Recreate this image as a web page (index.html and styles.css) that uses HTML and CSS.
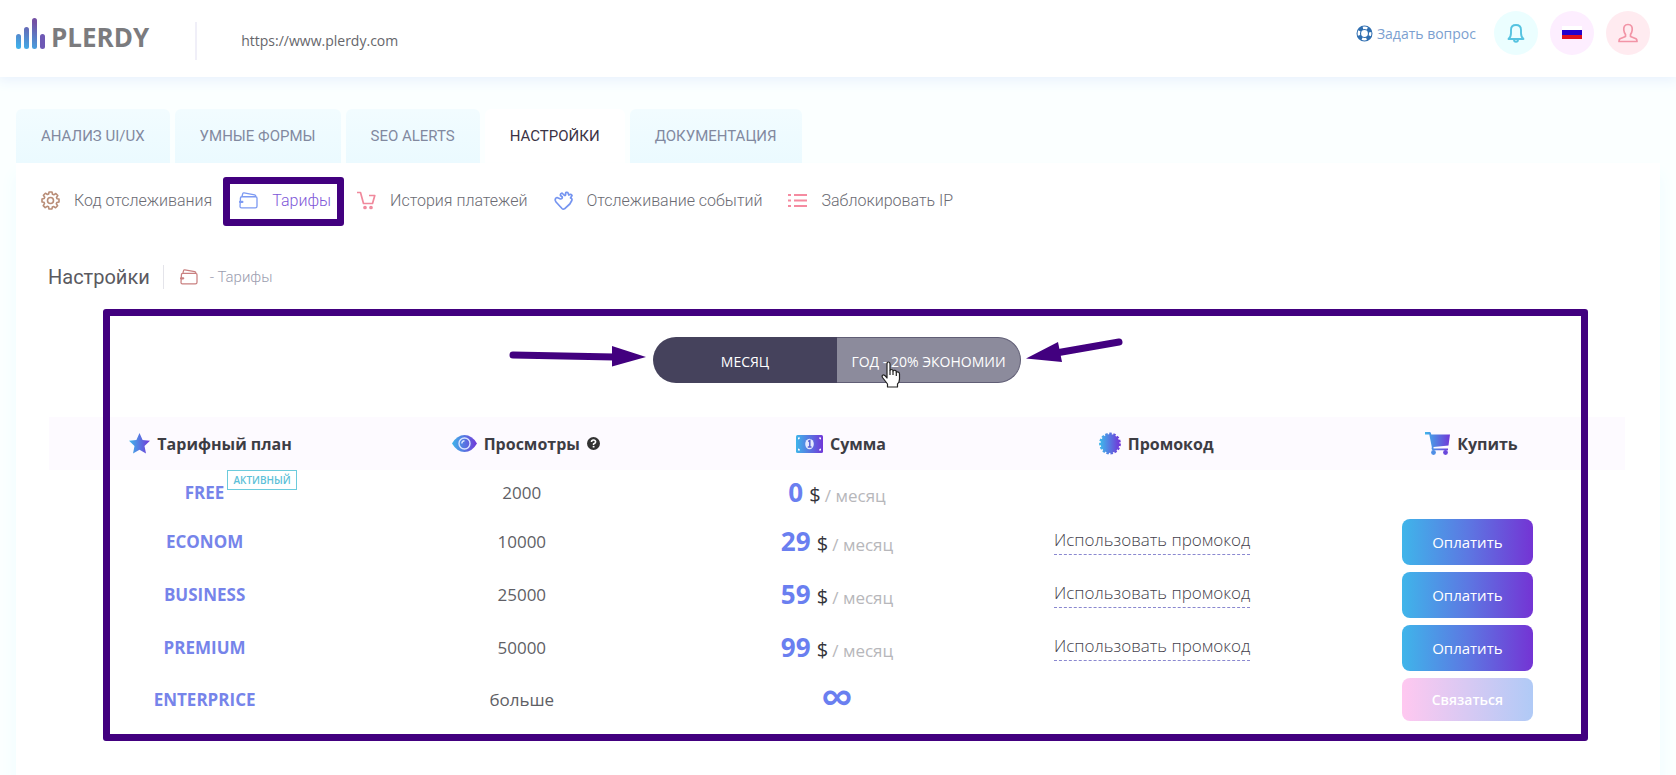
FILE: index.html
```html
<!DOCTYPE html>
<html lang="ru">
<head>
<meta charset="utf-8">
<meta name="viewport" content="width=device-width, initial-scale=1">
<title>Plerdy — Тарифы</title>
<link rel="stylesheet" href="styles.css">
</head>
<body>
<svg class="defs" width="0" height="0" aria-hidden="true">
  <defs>
    <linearGradient id="brand" x1="0" y1="0" x2="1" y2="0"><stop offset="0" stop-color="#3fb5ea"/><stop offset="1" stop-color="#7137d8"/></linearGradient>
    <linearGradient id="bars" gradientUnits="userSpaceOnUse" x1="6" y1="31" x2="18" y2="4"><stop offset="0" stop-color="#3fb0ea"/><stop offset="1" stop-color="#7450a4"/></linearGradient>
    <symbol id="wallet" viewBox="0 0 20 18"><path d="M1.500 6.500 1 15.300Q1 16.800 2.500 16.800H17.200Q19 16.800 19 15V6.500Q19 5 17.500 5H3Q1.500 5 1.500 6.500M3 5 4 1.500Q4.300 .800 5.300 1L16.500 3Q17.800 3.300 17.800 5" fill="none" stroke="currentColor" stroke-width="1.400" stroke-linejoin="round"/><path d="M1 10.500H3.500" stroke="currentColor" stroke-width="2.400" stroke-linecap="round"/></symbol>
  </defs>
</svg>

<header class="header">
  <a class="logo" href="#">
    <svg width="29" height="31" viewBox="0 0 29 31" aria-hidden="true"><g fill="url(#bars)"><rect x="0" y="16" width="5" height="15" rx="2.500"/><rect x="8" y="9" width="5" height="22" rx="2.500"/><rect x="16" y="0" width="5" height="31" rx="2.500"/></g><rect x="24" y="16" width="5" height="15" rx="2.500" fill="#6e58b4"/></svg>
    <span>PLERDY</span>
  </a>
  <span class="site">https://www.plerdy.com</span>
  <div class="tools">
    <a class="ask" href="#">
      <svg width="17" height="17" viewBox="0 0 17 17" aria-hidden="true"><circle cx="8.500" cy="8.500" r="5.700" fill="none" stroke="#2f6eb0" stroke-width="4.600"/><circle cx="8.500" cy="8.500" r="5.700" fill="none" stroke="#fff" stroke-width="2.400" stroke-dasharray="4.600 4.350" stroke-dashoffset="2.300"/></svg>
      <span>Задать вопрос</span>
    </a>
    <button class="round round-bell" type="button" aria-label="Уведомления">
      <svg width="18" height="20" viewBox="0 0 18 20" fill="none" stroke="#55c3e0" stroke-width="1.900" stroke-linejoin="round"><path d="M1.500 16Q4 14 4 10V7Q4 2 9 2T14 7V10Q14 14 16.500 16ZM7 16.500Q7 18.800 9 18.800T11 16.500"/></svg>
    </button>
    <button class="round round-lang" type="button" aria-label="Русский">
      <svg width="20" height="14" viewBox="0 0 20 14"><path fill="#fff" d="M0 0H20V4H0z"/><path fill="#2200cc" d="M0 4H20V9H0z"/><path fill="#e0101c" d="M0 9H20V13H0z"/></svg>
    </button>
    <button class="round round-user" type="button" aria-label="Профиль">
      <svg width="20" height="20" viewBox="0 0 20 20" fill="none" stroke="#f294a6" stroke-width="1.700" stroke-linejoin="round"><path d="M10 1.500C6.500 1.500 5.500 4 5.800 7C6 9.200 6.800 10.500 7.500 11.500V13.500L2 15.800Q1 16.500 1 18.500H19Q19 16.500 18 15.800L12.500 13.500V11.500C13.200 10.500 14 9.200 14.200 7C14.500 4 13.500 1.500 10 1.500Z"/></svg>
    </button>
  </div>
</header>

<main class="page">
  <nav class="tabs" aria-label="Разделы">
    <a class="tab" href="#">АНАЛИЗ UI/UX</a>
    <a class="tab" href="#">УМНЫЕ ФОРМЫ</a>
    <a class="tab" href="#">SEO ALERTS</a>
    <a class="tab tab-active" href="#" aria-current="page">НАСТРОЙКИ</a>
    <a class="tab" href="#">ДОКУМЕНТАЦИЯ</a>
  </nav>

  <div class="panel">
    <nav class="subnav" aria-label="Настройки">
      <a class="sub" href="#">
        <svg width="19" height="19" viewBox="0 0 19 19" fill="none" stroke="#b98d77" stroke-width="1.600" stroke-linejoin="round"><circle cx="9.500" cy="9.500" r="3"/><path d="M8 1h3l.500 2.300 1.300.500 2-1.300 2 2-1.300 2 .500 1.300L18 8v3l-2.200.500-.500 1.300 1.300 2-2 2-2-1.300-1.300.500L11 18H8l-.500-2.200-1.300-.500-2 1.300-2-2 1.300-2-.500-1.300L1 11V8l2.200-.500.500-1.300-1.300-2 2-2 2 1.300 1.300-.500z"/></svg>
        <span>Код отслеживания</span>
      </a>
      <a class="sub sub-active" href="#">
        <svg class="wallet-blue" width="19" height="17"><use href="#wallet"/></svg>
        <span>Тарифы</span>
      </a>
      <a class="sub" href="#">
        <svg width="19" height="19" viewBox="0 0 19 19" fill="none" stroke="#f0899c" stroke-width="1.700" stroke-linejoin="round"><path d="M0 1.500H3.500L6.500 12.500H15.500L17.800 4.500H12"/><circle cx="8" cy="16.500" r="1"/><circle cx="14" cy="16.500" r="1"/></svg>
        <span>История платежей</span>
      </a>
      <a class="sub" href="#">
        <svg width="19" height="19" viewBox="0 0 19 19" fill="none" stroke="#7594f0" stroke-width="1.700" stroke-linejoin="round" stroke-linecap="round"><path d="M1.300 9.500Q.800 7 3 6.500L6.500 8Q8.500 8 8.300 6L6.500 4.500Q6 2.500 8 2L10.500 4.500Q12 4.500 11.500 2.500Q12 .800 13.800 1.500L14.800 4Q17 2.500 18 4.500L16.500 7Q18.500 7.500 17.800 9.500L15.800 13L10.500 17.800Q9 18.500 8 17.500L2 11Z"/></svg>
        <span>Отслеживание событий</span>
      </a>
      <a class="sub" href="#">
        <svg width="19" height="15" viewBox="0 0 19 15" stroke="#f58ba0" stroke-width="1.800"><path d="M0 2H3M0 7.500H3M0 13H3M6 2H19M6 7.500H19M6 13H19"/></svg>
        <span>Заблокировать IP</span>
      </a>
    </nav>

    <div class="crumbs">
      <h1 class="title">Настройки</h1>
      <svg class="wallet-red" width="18" height="16"><use href="#wallet"/></svg>
      <span class="crumb">- Тарифы</span>
    </div>

    <section class="plans">
      <div class="period">
        <div class="toggle" role="group" aria-label="Период оплаты">
          <button class="toggle-item toggle-on" type="button" aria-pressed="true">МЕСЯЦ</button>
          <button class="toggle-item" type="button" aria-pressed="false">ГОД - 20% ЭКОНОМИИ</button>
          <svg class="arrow arrow-left" width="140" height="24" viewBox="0 0 140 24" fill="#42007f"><path d="M5 12 106 14" stroke="#42007f" stroke-width="7" stroke-linecap="round"/><path d="M104 3 138 14 104 23.500z"/></svg>
          <svg class="arrow arrow-right" width="100" height="28" viewBox="0 0 100 28" fill="#42007f"><path d="M93 5 30 16" stroke="#42007f" stroke-width="7" stroke-linecap="round"/><path d="M0 21.500 32 5 36 25z"/></svg>
          <svg class="pointer" width="20" height="27" viewBox="0 0 20 27"><path d="M6 15V3Q6 1 7.500 1T9 3V9.500Q9 8.500 10.500 8.500T12 10Q12.500 9 14 9.300T15.300 11Q18.500 10.500 18.500 13V18Q18.500 21 16.500 23V26H6.500V23L1.500 16.500Q.500 14.500 2 14T6 17Z" fill="#fff" stroke="#222" stroke-width="1.200" stroke-linejoin="round"/><path d="M9 9.500V14M12 10V14M15.300 11V15" stroke="#222" stroke-width="1.200"/></svg>
        </div>
      </div>

      <table class="table">
        <thead>
          <tr>
            <th scope="col"><span class="head"><svg width="21" height="21" viewBox="0 0 21 21"><path fill="url(#brand)" d="M10.500 0 13.600 6.900 21 7.800 15.500 12.900 17 20.500 10.500 16.700 4 20.500 5.500 12.900 0 7.800 7.400 6.900z"/></svg>Тарифный план</span></th>
            <th scope="col"><span class="head"><svg width="25" height="17" viewBox="0 0 25 17"><path fill="url(#brand)" d="M0 8.500Q5 0 12.500 0T25 8.500Q20 17 12.500 17T0 8.500z"/><circle cx="12.500" cy="8.500" r="5.500" fill="none" stroke="#dbe4ff" stroke-width="1.400"/><path d="M9.800 8.500Q10 6 12.500 5.800" fill="none" stroke="#dbe4ff" stroke-width="1.400"/></svg>Просмотры<svg width="13" height="13" viewBox="0 0 13 13"><circle cx="6.500" cy="6.500" r="6.500" fill="#333"/><path d="M4.500 5Q4.500 3 6.500 3T8.600 4.900Q8.600 5.900 6.600 6.900V8" fill="none" stroke="#fff" stroke-width="1.600"/><path d="M5.700 8.900H7.500V10.500H5.700z" fill="#fff"/></svg></span></th>
            <th scope="col"><span class="head"><svg width="27" height="18" viewBox="0 0 27 18"><rect width="27" height="18" rx="1.500" fill="url(#brand)"/><ellipse cx="13.500" cy="9" rx="4.300" ry="5.200" fill="#e4eaff"/><path d="M12.200 6.500 13.800 5.500V11.800M11.800 12H15.500" fill="none" stroke="#5a62d0" stroke-width="1.500"/><path d="M2 4.500Q4 4.500 4 2.500H2zM25 4.500Q23 4.500 23 2.500H25zM2 13.500Q4 13.500 4 15.500H2zM25 13.500Q23 13.500 23 15.500H25z" fill="#fff"/></svg>Сумма</span></th>
            <th scope="col"><span class="head"><svg width="22" height="23" viewBox="0 0 22 23"><circle cx="11" cy="11.500" r="9.500" fill="url(#brand)"/><circle cx="11" cy="11.500" r="9.700" fill="none" stroke="url(#brand)" stroke-width="2.400" stroke-dasharray="2.500 1.560"/></svg>Промокод</span></th>
            <th scope="col"><span class="head"><svg width="25" height="23" viewBox="0 0 25 23"><path fill="url(#brand)" d="M0 0H5Q6 .300 6.300 2.500H25L23.500 13.500 8.500 15V16.500H23V18.200H7.500Q6 17.500 6.800 15L4.300 2.500H0z"/><circle cx="8.500" cy="20.500" r="2.400" fill="#4f8fe6"/><circle cx="20.500" cy="20.500" r="2.400" fill="#6947dc"/></svg>Купить</span></th>
          </tr>
        </thead>
        <tbody>
          <tr class="row-free">
            <td class="plan"><span class="plan-name">FREE<span class="badge">АКТИВНЫЙ</span></span></td>
            <td class="views">2000</td>
            <td class="price"><b>0</b> <span class="cur">$</span> <small>/ месяц</small></td>
            <td></td>
            <td></td>
          </tr>
          <tr class="row">
            <td class="plan">ECONOM</td>
            <td class="views">10000</td>
            <td class="price"><b>29</b> <span class="cur">$</span> <small>/ месяц</small></td>
            <td class="code"><a class="promo" href="#">Использовать промокод</a></td>
            <td><button class="pay" type="button">Оплатить</button></td>
          </tr>
          <tr class="row">
            <td class="plan">BUSINESS</td>
            <td class="views">25000</td>
            <td class="price"><b>59</b> <span class="cur">$</span> <small>/ месяц</small></td>
            <td class="code"><a class="promo" href="#">Использовать промокод</a></td>
            <td><button class="pay" type="button">Оплатить</button></td>
          </tr>
          <tr class="row">
            <td class="plan">PREMIUM</td>
            <td class="views">50000</td>
            <td class="price"><b>99</b> <span class="cur">$</span> <small>/ месяц</small></td>
            <td class="code"><a class="promo" href="#">Использовать промокод</a></td>
            <td><button class="pay" type="button">Оплатить</button></td>
          </tr>
          <tr class="row-last">
            <td class="plan">ENTERPRICE</td>
            <td class="views">больше</td>
            <td class="infinity">∞</td>
            <td></td>
            <td><button class="pay pay-contact" type="button">Связаться</button></td>
          </tr>
        </tbody>
      </table>
      <div class="frame" aria-hidden="true"></div>
    </section>
  </div>
</main>
</body>
</html>
```
FILE: styles.css
```css
* { box-sizing: border-box; }
body {
  margin: 0;
  min-height: 100vh;
  display: flex;
  flex-direction: column;
  background: #fbffff;
  color: #4a4a52;
  font-family: "Open Sans", "Noto Sans", sans-serif;
  font-size: 16px;
}
a { color: inherit; text-decoration: none; }
button { border: 0; padding: 0; font: inherit; cursor: pointer; }
svg { flex: none; display: block; }
.defs { position: absolute; }

.header {
  display: flex;
  align-items: flex-start;
  height: 77px;
  padding: 11px 26px 0 16px;
  background: #fff;
  box-shadow: 0 2px 12px 2px #e9f2fd;
}
.logo { display: flex; align-items: flex-end; gap: 6px; padding-top: 7px; }
.logo span { color: #7b7b7e; font-size: 26px; font-weight: 700; line-height: 23px; }
.site {
  margin: 11px 0 0 46px;
  padding-left: 44px;
  border-left: 2px solid #f0eff8;
  color: #66666b;
  font-size: 14px;
  line-height: 38px;
}
.tools { display: flex; align-items: center; gap: 12px; margin-left: auto; }
.ask { display: flex; align-items: center; gap: 4px; margin-right: 6px; color: #7c9fd0; font-size: 14px; }
.round {
  display: flex;
  align-items: center;
  justify-content: center;
  width: 44px;
  height: 44px;
  border-radius: 50%;
}
.round-bell { background: #ebfeff; }
.round-lang { background: #fdeeff; }
.round-user { background: #ffebf0; }

.page { display: flex; flex: 1; flex-direction: column; padding: 32px 16px 0; }
.tabs { display: flex; gap: 5px; }
.tab {
  padding: 0 25px;
  border-radius: 6px 6px 0 0;
  background: linear-gradient(#f2fcff, #ebfaff);
  color: #82899f;
  font-family: Roboto, sans-serif;
  font-size: 15px;
  line-height: 54px;
}
.tab-active { background: #fff; color: #3b3346; }

.panel {
  flex: 1;
  padding: 14px 0 33px;
  background: #fff;
  box-shadow: 0 12px 16px #eefcff;
}
.subnav { display: flex; align-items: center; padding-left: 14px; font-family: Roboto, sans-serif; }
.sub {
  display: flex;
  align-items: center;
  gap: 14px;
  height: 49px;
  padding: 0 15px 2px 11px;
  color: #6b6b73;
  font-size: 16px;
  font-weight: 300;
}
.sub-active {
  margin: 0 2px 0 -4px;
  padding: 0 6px 2px 9px;
  border: 7px solid #42007f;
  border-radius: 3px;
  color: #8058d8;
}
.wallet-blue { color: #7d9af2; }

.crumbs {
  display: flex;
  align-items: center;
  padding: 39px 32px 0;
  font-family: Roboto, sans-serif;
}
.title {
  margin: 0 16px 0 0;
  padding-right: 13px;
  border-right: 1px solid #e4e4ea;
  color: #5a5a5f;
  font-size: 20px;
  font-weight: 400;
  line-height: 24px;
}
.wallet-red { color: #c98080; }
.crumb { margin-left: 12px; color: #9b9daf; font-size: 15px; font-weight: 300; }

.plans { position: relative; margin-top: 20px; padding: 28px 35px 17px 33px; }
.frame {
  position: absolute;
  inset: 0 72px 0 87px;
  border: 7px solid #42007f;
  border-radius: 3px;
  pointer-events: none;
}
.period { display: flex; justify-content: center; margin-bottom: 34px; }
.toggle { position: relative; display: flex; }
.toggle-item {
  width: 184px;
  height: 46px;
  padding-top: 2px;
  border: 1px solid #605e75;
  border-left: 0;
  border-radius: 0 23px 23px 0;
  background: #8c8b9c;
  color: #fff;
  font-size: 14px;
}
.toggle-on { border: 0; border-radius: 23px 0 0 23px; background: #45425c; }
.arrow { position: absolute; }
.arrow-left { top: 6px; right: calc(100% + 5px); }
.arrow-right { top: 0; left: calc(100% + 5px); }
.pointer { position: absolute; top: 24px; left: 228px; }

.table { width: 100%; border-collapse: collapse; table-layout: fixed; text-align: center; }
.table th, .table td { padding: 0; }
.table th { height: 53px; background: #fdfaff; color: #3d3d44; font-size: 16px; font-weight: 700; }
.head { display: flex; align-items: center; justify-content: center; gap: 7px; padding-left: 8px; }
.row-free { height: 45px; }
.row { height: 53px; }
.row-last { height: 50px; }
.table .plan { padding-right: 4px; color: #7684ea; font-size: 17px; font-weight: 700; }
.plan-name { position: relative; }
.badge {
  position: absolute;
  left: calc(100% + 3px);
  bottom: 14px;
  padding: 0 5px;
  border: 1px solid #6ccbdc;
  background: #fff;
  color: #5cbfd8;
  font-size: 10px;
  font-weight: 600;
  line-height: 18px;
}
.views { color: #5f5f66; font-size: 17px; }
.table .price { padding-top: 2px; color: #33333a; line-height: 36px; }
.price b { color: #6a7ff0; font-size: 26px; }
.price .cur { margin-left: 2px; font-size: 20px; }
.price small { color: #b7b7bb; font-size: 17px; }
.table .infinity { padding-bottom: 6px; color: #6a7ff0; font-size: 46px; font-weight: 600; line-height: 36px; }
.table .code { padding-bottom: 4px; }
.promo { padding-bottom: 3px; border-bottom: 1px dashed #8a88d0; color: #443f4c; font-size: 17px; font-weight: 300; }
.pay {
  width: 131px;
  height: 46px;
  border-radius: 8px;
  background: linear-gradient(90deg, #3fb5ea, #5c78e2 50%, #7434d4);
  color: #fff;
  font-size: 15px;
  vertical-align: middle;
}
.pay-contact { height: 43px; background: linear-gradient(90deg, #ffc8f0, #b0caf6); font-size: 14px; font-weight: 600; }
```
